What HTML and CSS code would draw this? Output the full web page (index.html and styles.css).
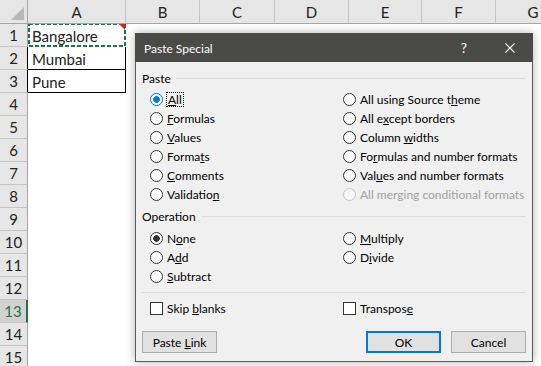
FILE: index.html
```html
<!DOCTYPE html>
<html lang="en">
<head>
    <meta charset="UTF-8">
    <meta name="viewport" content="width=device-width, initial-scale=1.0">
    <title>Paste Special</title>
    <link rel="stylesheet" href="styles.css">
</head>
<body>
    <div class="sheet">
        <div class="row head">
            <div class="rh corner"><span class="corner-tri"></span></div>
            <div class="ch col-a">A</div>
            <div class="ch col-b">B</div>
            <div class="ch col-c">C</div>
            <div class="ch col-d">D</div>
            <div class="ch col-e">E</div>
            <div class="ch col-f">F</div>
            <div class="ch col-g">G</div>
        </div>
        <div class="row">
            <div class="rh">1</div>
            <div class="cell col-a boxed copied">
                Bangalore
                <svg class="ants" width="98" height="24" viewBox="0 0 98 24">
                    <rect x="1" y="1" width="96" height="22" fill="none" stroke="#217346" stroke-width="2" stroke-dasharray="4 2"/>
                </svg>
                <span class="comment-mark"></span>
            </div>
        </div>
        <div class="row">
            <div class="rh edge">2</div>
            <div class="cell col-a boxed">Mumbai</div>
        </div>
        <div class="row">
            <div class="rh edge">3</div>
            <div class="cell col-a boxed">Pune</div>
        </div>
        <div class="row"><div class="rh">4</div></div>
        <div class="row"><div class="rh">5</div></div>
        <div class="row"><div class="rh">6</div></div>
        <div class="row"><div class="rh">7</div></div>
        <div class="row"><div class="rh">8</div></div>
        <div class="row"><div class="rh">9</div></div>
        <div class="row"><div class="rh">10</div></div>
        <div class="row"><div class="rh">11</div></div>
        <div class="row"><div class="rh">12</div></div>
        <div class="row"><div class="rh active">13</div></div>
        <div class="row"><div class="rh">14</div></div>
        <div class="row"><div class="rh">15</div></div>
    </div>

    <div class="dialog">
        <div class="titlebar">
            <span class="title">Paste Special</span>
            <span class="tb-btn">?</span>
            <span class="tb-btn">
                <svg width="10" height="10" viewBox="0 0 10 10">
                    <path d="M0.5 0.5 L9.5 9.5 M9.5 0.5 L0.5 9.5" stroke="#fff" stroke-width="1.1" fill="none"/>
                </svg>
            </span>
        </div>
        <div class="dlg-body">
            <div class="group"><span>Paste</span></div>
            <div class="opts">
                <label class="opt"><input type="radio" name="paste" class="focused" checked><span class="focus-rect"><u>A</u>ll</span></label>
                <label class="opt"><input type="radio" name="paste"><span>All using Source t<u>h</u>eme</span></label>
                <label class="opt"><input type="radio" name="paste"><span><u>F</u>ormulas</span></label>
                <label class="opt"><input type="radio" name="paste"><span>All e<u>x</u>cept borders</span></label>
                <label class="opt"><input type="radio" name="paste"><span><u>V</u>alues</span></label>
                <label class="opt"><input type="radio" name="paste"><span>Column <u>w</u>idths</span></label>
                <label class="opt"><input type="radio" name="paste"><span>Forma<u>t</u>s</span></label>
                <label class="opt"><input type="radio" name="paste"><span>Fo<u>r</u>mulas and number formats</span></label>
                <label class="opt"><input type="radio" name="paste"><span><u>C</u>omments</span></label>
                <label class="opt"><input type="radio" name="paste"><span>Val<u>u</u>es and number formats</span></label>
                <label class="opt"><input type="radio" name="paste"><span>Validatio<u>n</u></span></label>
                <label class="opt disabled"><input type="radio" name="paste" disabled><span>All merging conditional formats</span></label>
            </div>

            <div class="group op-group"><span>Operation</span></div>
            <div class="opts op-opts">
                <label class="opt"><input type="radio" name="op" checked><span>N<u>o</u>ne</span></label>
                <label class="opt"><input type="radio" name="op"><span><u>M</u>ultiply</span></label>
                <label class="opt"><input type="radio" name="op"><span>A<u>d</u>d</span></label>
                <label class="opt"><input type="radio" name="op"><span>D<u>i</u>vide</span></label>
                <label class="opt"><input type="radio" name="op"><span><u>S</u>ubtract</span></label>
            </div>

            <div class="sep"></div>

            <div class="opts checks">
                <label class="opt"><input type="checkbox"><span>Skip <u>b</u>lanks</span></label>
                <label class="opt"><input type="checkbox"><span>Transpos<u>e</u></span></label>
            </div>

            <div class="buttons">
                <button type="button">Paste <u>L</u>ink</button>
                <span class="spacer"></span>
                <button type="button" class="default">OK</button>
                <button type="button">Cancel</button>
            </div>
        </div>
    </div>
</body>
</html>
```

FILE: styles.css
```css
body {
    margin: 0;
    width: 541px;
    height: 366px;
    overflow: hidden;
    position: relative;
    background: #fff;
    font-family: Lato, "Liberation Sans", sans-serif;
}

/* spreadsheet */
.sheet { font-size: 15px; color: #222; }
.row { display: flex; height: 23px; overflow: hidden; }
.row.head {
    height: 24px;
    background: #e6e6e6;
    border-bottom: 1px solid #a6a6a6;
    box-sizing: border-box;
}
.rh {
    width: 28px;
    flex: none;
    box-sizing: border-box;
    background: #e6e6e6;
    border-right: 1px solid #a6a6a6;
    border-bottom: 1px solid #c4c4c4;
    display: flex;
    align-items: center;
    justify-content: center;
}
.rh.edge { border-right-color: #000; }
.rh.active {
    background: #d2d2d2;
    color: #217346;
    border-right: 2px solid #217346;
}
.corner { border-bottom: none; position: relative; }
.corner-tri {
    position: absolute;
    right: 3px;
    bottom: 3px;
    width: 0;
    height: 0;
    border-left: 13px solid transparent;
    border-bottom: 13px solid #b8b8b8;
}
.ch {
    flex: none;
    box-sizing: border-box;
    border-right: 1px solid #c4c4c4;
    display: flex;
    align-items: center;
    justify-content: center;
}
.col-a { width: 98px; }
.col-b { width: 74px; }
.col-c { width: 75px; }
.col-d { width: 74px; }
.col-e { width: 73px; }
.col-f { width: 74px; }
.col-g { width: 74px; border-right: none; }

.cell {
    flex: none;
    box-sizing: border-box;
    padding-left: 4px;
    display: flex;
    align-items: center;
    position: relative;
}
.boxed { box-shadow: inset -1px 0 #000, inset 0 -1px #000; }
.copied { box-shadow: none; }
.ants { position: absolute; left: 0; top: -1px; }
.comment-mark {
    position: absolute;
    right: 1px;
    top: 0;
    width: 0;
    height: 0;
    border-top: 6px solid #e0201b;
    border-left: 6px solid transparent;
}

/* dialog */
.dialog {
    position: absolute;
    left: 135px;
    top: 33px;
    width: 398px;
    height: 329px;
    box-sizing: border-box;
    border: 1px solid #5a5a58;
    background: #f0f0f0;
    box-shadow: 0 0 9px rgba(0, 0, 0, 0.3);
    font-size: 12px;
    color: #000;
    display: flex;
    flex-direction: column;
}
.titlebar {
    height: 29px;
    background: #4a4a48;
    color: #fff;
    display: flex;
    align-items: center;
    margin: -1px -1px 0;
}
.title { flex: 1; padding-left: 9px; padding-top: 2px; }
.tb-btn {
    width: 46px;
    height: 29px;
    display: flex;
    align-items: center;
    justify-content: center;
    font-size: 14px;
}

.dlg-body { padding: 8px 6px 0; }
.group { display: flex; align-items: center; height: 16px; }
.group::after {
    content: "";
    flex: 1;
    height: 1px;
    background: #dcdcdc;
    margin-left: 5px;
}
.op-group { margin-top: 4px; }

.opts {
    display: grid;
    grid-template-columns: 193px 1fr;
    margin-top: 4px;
}
.op-opts { margin-top: 5px; }
.opt {
    display: flex;
    align-items: center;
    height: 19px;
    padding-left: 8px;
    white-space: nowrap;
}
.opt input {
    appearance: none;
    -webkit-appearance: none;
    width: 13px;
    height: 13px;
    margin: 0 4px 0 0;
    box-sizing: border-box;
    border: 1px solid #333;
    border-radius: 50%;
    background: #fff;
    flex: none;
}
.opt input:checked { background: radial-gradient(circle, #333 3px, #fff 3.6px); }
.opt input.focused { border-color: #0078d7; }
.opt input.focused:checked { background: radial-gradient(circle, #0078d7 3px, #fff 3.6px); }
.opt input[type="checkbox"] { border-radius: 0; }
.opt.disabled { color: #a0a0a0; }
.opt.disabled input { border-color: #c4c4c4; background: #f7f7f7; }
.focus-rect { border: 1px dotted #000; padding: 0 1px; margin-left: -1px; line-height: 13px; }

.sep { height: 1px; background: #dcdcdc; margin-top: 6px; }
.checks { margin-top: 6px; }

.buttons { display: flex; margin-top: 13px; }
.spacer { flex: 1; }
button {
    width: 75px;
    height: 22px;
    box-sizing: border-box;
    border: 1px solid #adadad;
    background: #e1e1e1;
    font-family: inherit;
    font-size: 12px;
    color: #000;
    padding: 0;
}
button.default { border: 2px solid #0078d7; margin-right: 10px; }
```
